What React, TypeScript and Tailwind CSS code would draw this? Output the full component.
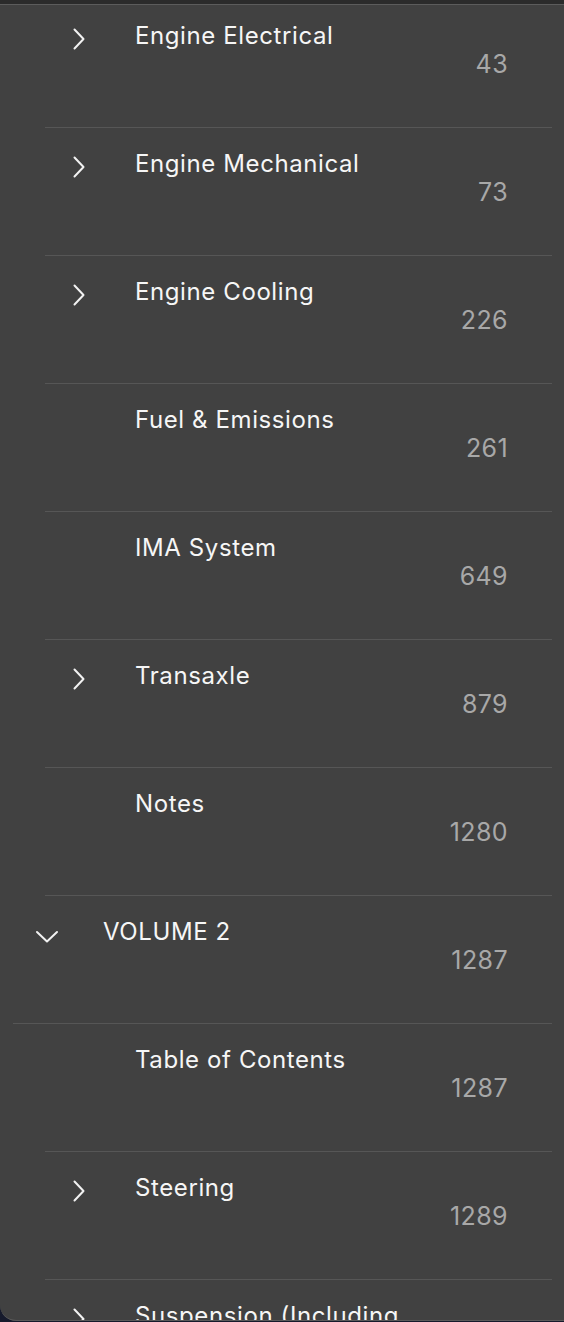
import React from "react";

type Entry = {
  title: string;
  page: number;
  level: 1 | 2;
  toggle?: "closed" | "open";
};

const entries: Entry[] = [
  { title: "Engine Electrical", page: 43, level: 2, toggle: "closed" },
  { title: "Engine Mechanical", page: 73, level: 2, toggle: "closed" },
  { title: "Engine Cooling", page: 226, level: 2, toggle: "closed" },
  { title: "Fuel & Emissions", page: 261, level: 2 },
  { title: "IMA System", page: 649, level: 2 },
  { title: "Transaxle", page: 879, level: 2, toggle: "closed" },
  { title: "Notes", page: 1280, level: 2 },
  { title: "VOLUME 2", page: 1287, level: 1, toggle: "open" },
  { title: "Table of Contents", page: 1287, level: 2 },
  { title: "Steering", page: 1289, level: 2, toggle: "closed" },
  { title: "Suspension (Including Alignment)", page: 1336, level: 2, toggle: "closed" },
];

const ChevronRight = () => (
  <svg width="14" height="24" viewBox="0 0 14 24" fill="none">
    <path
      d="M2.5 2.5 L11.5 12 L2.5 21.5"
      stroke="#f2f2f2"
      strokeWidth="2"
      strokeLinecap="round"
      strokeLinejoin="round"
    />
  </svg>
);

const ChevronDown = () => (
  <svg width="24" height="14" viewBox="0 0 24 14" fill="none">
    <path
      d="M2 2 L12 11.5 L22 2"
      stroke="#f2f2f2"
      strokeWidth="2"
      strokeLinecap="round"
      strokeLinejoin="round"
    />
  </svg>
);

const Row: React.FC<{ entry: Entry }> = ({ entry }) => (
  <div
    className={`flex h-[128px] shrink-0 border-b border-[#565656] mr-[12px] ${
      entry.level === 1 ? "ml-[13px]" : "ml-[45px]"
    }`}
  >
    {/* chevron column */}
    <div className="flex w-[67px] shrink-0 justify-center pt-[27px]">
      {entry.toggle === "closed" && <ChevronRight />}
      {entry.toggle === "open" && (
        <div className="pt-[7px]">
          <ChevronDown />
        </div>
      )}
    </div>

    <div className="flex flex-1 flex-col pl-[23px] pr-[44px] pt-[21px]">
      <div className="text-[24px] leading-[29px] tracking-[0.6px] text-[#f6f6f6]">
        {entry.title}
      </div>
      <div className="mt-[-1px] text-right text-[25px] leading-[30px] tracking-[0.4px] text-[#a8a8a8]">
        {entry.page}
      </div>
    </div>
  </div>
);

export default function App() {
  return (
    <div
      className="h-[1322px] w-[564px] overflow-hidden bg-[#161a2c]"
      style={{ fontFamily: "Inter, 'Noto Sans', sans-serif" }}
    >
      <div className="relative flex h-[1321px] flex-col overflow-hidden rounded-bl-[16px] border-b border-[#5a5a5a] bg-[#414141]">
        {/* window frame edge */}
        <div className="absolute left-0 right-0 top-0 z-10">
          <div className="h-[4px] bg-[#2b2b2b]" />
          <div className="h-px bg-[#5c5c5c]" />
        </div>

        {entries.map((e, i) => (
          <Row key={i} entry={e} />
        ))}
      </div>
    </div>
  );
}
